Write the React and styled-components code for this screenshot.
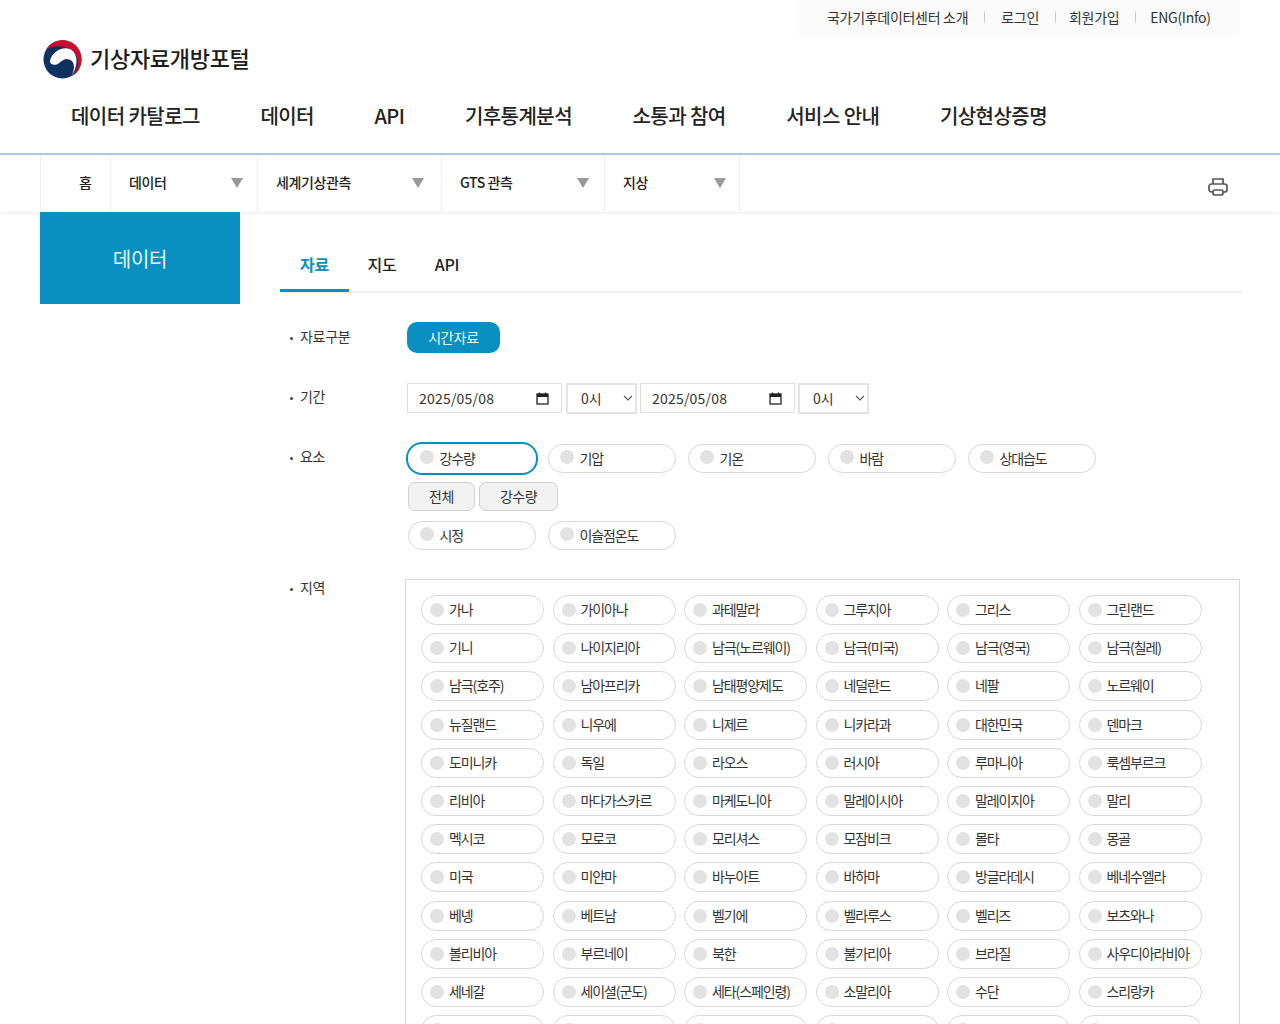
import React from 'react';
import styled, { createGlobalStyle } from 'styled-components';

const GlobalStyle = createGlobalStyle`
  html, body {
    margin: 0;
    padding: 0;
    background: #fff;
    color: #222;
    font-family: "Noto Sans CJK KR", "Noto Sans", sans-serif;
  }
  * { box-sizing: border-box; }
`;

const Page = styled.div`
  width: 1280px;
  height: 1024px;
  overflow: hidden;
`;

const Util = styled.div`
  display: flex;
  justify-content: flex-end;
  padding-right: 40px;
`;

const UtilBox = styled.div`
  display: flex;
  align-items: center;
  width: 443px;
  height: 35px;
  padding: 0 0 2px 30px;
  background: #fafafa;
  border-radius: 0 0 6px 6px;
  font-size: 14px;
  letter-spacing: -0.3px;
  color: #333;
`;

const UtilLink = styled.a`
  display: flex;
  align-items: center;
  &:not(:first-child)::before {
    content: '';
    width: 1px;
    height: 12px;
    margin: 0 ${(p) => p.$after}px 0 16px;
    background: #ccc;
  }
`;

const LogoRow = styled.div`
  display: flex;
  align-items: center;
  gap: 8px;
  height: 46px;
  margin: 1px 0 0 43px;
`;

const LogoText = styled.span`
  margin-bottom: 4px;
  font-size: 22px;
  font-weight: 500;
  letter-spacing: -0.3px;
  color: #1c1c1c;
`;

const MainNav = styled.nav`
  display: flex;
  align-items: center;
  gap: 60.5px;
  height: 73px;
  padding: 0 0 4px 71px;
  border-bottom: 2px solid #a9cbe2;
  font-size: 20px;
  font-weight: 500;
  letter-spacing: -0.55px;
  color: #222;
`;

const Crumbs = styled.div`
  display: flex;
  height: 57px;
  padding: 0 40px;
  background: #fff;
  box-shadow: 0 1px 3px rgba(0, 0, 0, 0.09);
  font-size: 14px;
  letter-spacing: -0.4px;
  font-weight: 500;
`;

const CrumbCell = styled.div`
  position: relative;
  display: flex;
  align-items: center;
  width: ${(p) => p.$w}px;
  padding: 0 0 3px ${(p) => p.$pad}px;
  border-left: 1px solid #eee;
  &:nth-child(5) { border-right: 1px solid #eee; }
`;

const Arrow = styled.span`
  position: absolute;
  right: ${(p) => p.$r}px;
  top: 23px;
  width: 0;
  height: 0;
  border-left: 6px solid transparent;
  border-right: 6px solid transparent;
  border-top: 10px solid #999;
`;

const PrintBtn = styled.div`
  display: flex;
  align-items: center;
  margin: 6px 11px 0 auto;
`;

const Body = styled.div`
  display: flex;
  padding: 0 40px;
  gap: 40px;
`;

const Side = styled.div`
  display: flex;
  align-items: center;
  justify-content: center;
  flex: 0 0 200px;
  height: 92px;
  background: #0a8fc1;
  color: #e6f5fb;
  font-size: 20px;
  letter-spacing: -0.2px;
`;

const Content = styled.div`
  flex: 1;
`;

const Tabs = styled.div`
  display: flex;
  height: 81px;
  margin-right: -2px;
  border-bottom: 2px solid #eee;
`;

const Tab = styled.div`
  display: flex;
  align-items: center;
  justify-content: center;
  width: ${(p) => p.$w}px;
  height: 80px;
  padding-top: ${(p) => (p.$active ? 27 : 23)}px;
  font-size: 16px;
  font-weight: ${(p) => (p.$active ? 700 : 500)};
  letter-spacing: -0.2px;
  color: ${(p) => (p.$active ? '#0a8fc1' : '#222')};
  border-bottom: ${(p) => (p.$active ? '3px solid #0a8fc1' : '0')};
`;

const FormRow = styled.div`
  display: flex;
  margin-top: ${(p) => p.$mt}px;
`;

const Label = styled.div`
  flex: 0 0 127px;
  margin-top: ${(p) => p.$top}px;
  padding-left: 10px;
  font-size: 14px;
  line-height: 20px;
  letter-spacing: -0.3px;
  color: #333;
  &::before {
    content: '';
    display: inline-block;
    width: 3px;
    height: 3px;
    margin-right: 7px;
    border-radius: 50%;
    vertical-align: middle;
    background: #444;
  }
`;

const Primary = styled.div`
  display: flex;
  align-items: center;
  justify-content: center;
  width: 93px;
  height: 31px;
  padding-bottom: 2px;
  border-radius: 10px;
  background: #0a8fc1;
  color: #f2fbff;
  font-size: 14px;
  letter-spacing: -0.2px;
`;

const PeriodRow = styled.div`
  display: flex;
  align-items: center;
  height: 30px;
`;

const DateBox = styled.div`
  display: flex;
  align-items: center;
  justify-content: space-between;
  width: 155px;
  height: 30px;
  padding: 0 12px 0 11px;
  border: 1px solid #ddd;
  font-size: 14px;
  letter-spacing: 0.2px;
  color: #333;
`;

const HourWrap = styled.div`
  position: relative;
  width: 71px;
  height: 31px;
  margin: 0 3px 0 ${(p) => p.$ml}px;
  color: #555;
  svg {
    position: absolute;
    right: 4px;
    top: 10px;
    pointer-events: none;
  }
`;

const HourSelect = styled.select`
  appearance: none;
  width: 100%;
  height: 100%;
  padding-left: 13px;
  border: 2px solid #e4e4e4;
  border-radius: 0;
  background: #fff;
  font-family: inherit;
  font-size: 14px;
  color: #333;
`;

const Elements = styled.div`
  display: flex;
  flex-direction: column;
`;

const PillRow = styled.div`
  display: flex;
  gap: 12px;
  padding-left: 0.5px;
`;

const Pill = styled.div`
  position: relative;
  display: flex;
  align-items: center;
  width: ${(p) => p.$w}px;
  height: ${(p) => p.$h}px;
  padding: 0 0 2px ${(p) => p.$pad}px;
  border: 1px solid #d8d8d8;
  border-radius: 16px;
  background: #fff;
  font-size: 14px;
  letter-spacing: -1.1px;
  color: #333;
  &::before {
    content: '';
    position: absolute;
    left: ${(p) => p.$dot}px;
    top: ${(p) => p.$dotTop}px;
    width: 14px;
    height: 14px;
    border-radius: 50%;
    background: #e2e2e2;
  }
`;

const FocusPill = styled(Pill)`
  border: 2px solid #0a8fc1;
  margin: -2px -2px -1px -2px;
  padding-left: 32px;
  width: 132px;
  height: 33px;
  &::before { left: 12px; top: 6px; }
`;

const ChipRow = styled.div`
  display: flex;
  gap: 4px;
  margin: 8px 0 10px 1px;
`;

const Chip = styled.div`
  display: flex;
  align-items: center;
  justify-content: center;
  width: ${(p) => p.$w}px;
  height: 29px;
  padding-bottom: 2px;
  border: 1px solid #d0d0d0;
  border-radius: 7px;
  background: #f2f2f2;
  font-size: 14px;
  letter-spacing: -0.5px;
  color: #333;
`;

const RegionBox = styled.div`
  display: grid;
  grid-template-columns: repeat(6, 123px);
  column-gap: 8.5px;
  row-gap: 8.2px;
  align-content: start;
  width: 835px;
  height: 520px;
  margin-left: -2px;
  padding: 15px 0 0 15px;
  border: 1px solid #d8d8d8;
`;

const Logo = () => (
  <svg width="39" height="39" viewBox="0 0 40 40">
    <circle cx="20" cy="20" r="19.5" fill="#10315f" />
    <path d="M3 10A19.500 19.500 0 0 1 39.500 20A19.500 19.500 0 0 1 29 37.500C35 32 38 24 34 16C29 7 14 3 3 10z" fill="#c8102e" />
    <path d="M7 22C9 12 20 6 28 9.500C35 13 37.500 25 29 37.500C33 30 33 22 27 20C22 18 19 22 16 24C13 26 8 26 7 22z" fill="#fff" />
  </svg>
);

const CalendarIcon = () => (
  <svg width="13" height="13" viewBox="0 0 13 13">
    <rect x="1" y="2" width="11" height="10" fill="none" stroke="#222" strokeWidth="1.300" />
    <rect x="1" y="2" width="11" height="3" fill="#222" />
    <path d="M3.500 .5v2M9.500 .5v2" stroke="#222" strokeWidth="1.300" />
  </svg>
);

const Chevron = () => (
  <svg width="10" height="10" viewBox="0 0 10 10" fill="none" stroke="currentColor" strokeWidth="1.100">
    <path d="M1 3l4 4 4-4" />
  </svg>
);

const PrintIcon = () => (
  <svg width="22" height="22" viewBox="0 0 22 22" fill="none" stroke="#555" strokeWidth="1.700">
    <path d="M6 8V3h10v5" />
    <rect x="2" y="8" width="18" height="8" rx="2.500" />
    <rect x="6" y="14" width="10" height="5" rx="2" fill="#fff" />
  </svg>
);

const navItems = ['데이터 카탈로그', '데이터', 'API', '기후통계분석', '소통과 참여', '서비스 안내', '기상현상증명'];

const crumbs = [
  { label: '데이터', w: 147, pad: 18, r: 14 },
  { label: '세계기상관측', w: 184, pad: 18, r: 17 },
  { label: 'GTS 관측', w: 163, pad: 18, r: 15 },
  { label: '지상', w: 136, pad: 18, r: 13 },
];

// the last row is cut off by the page edge, only the pill tops show
const regions = [
  '가나', '가이아나', '과테말라', '그루지아', '그리스', '그린랜드',
  '기니', '나이지리아', '남극(노르웨이)', '남극(미국)', '남극(영국)', '남극(칠레)',
  '남극(호주)', '남아프리카', '남태평양제도', '네덜란드', '네팔', '노르웨이',
  '뉴질랜드', '니우에', '니제르', '니카라과', '대한민국', '덴마크',
  '도미니카', '독일', '라오스', '러시아', '루마니아', '룩셈부르크',
  '리비아', '마다가스카르', '마케도니아', '말레이시아', '말레이지아', '말리',
  '멕시코', '모로코', '모리셔스', '모잠비크', '몰타', '몽골',
  '미국', '미얀마', '바누아트', '바하마', '방글라데시', '베네수엘라',
  '베넹', '베트남', '벨기에', '벨라루스', '벨리즈', '보츠와나',
  '볼리비아', '부르네이', '북한', '불가리아', '브라질', '사우디아라비아',
  '세네갈', '세이셜(군도)', '세타(스페인령)', '소말리아', '수단', '스리랑카',
  '', '', '', '', '', '',
];

const elements = ['기압', '기온', '바람', '상대습도'];

export default function App() {
  return (
    <Page>
      <GlobalStyle />
      <Util>
        <UtilBox>
          <UtilLink>국가기후데이터센터 소개</UtilLink>
          <UtilLink $after={16}>로그인</UtilLink>
          <UtilLink $after={13}>회원가입</UtilLink>
          <UtilLink $after={14}>ENG(Info)</UtilLink>
        </UtilBox>
      </Util>
      <LogoRow>
        <Logo />
        <LogoText>기상자료개방포털</LogoText>
      </LogoRow>
      <MainNav>
        {navItems.map((item) => (
          <span key={item}>{item}</span>
        ))}
      </MainNav>
      <Crumbs>
        <CrumbCell $w={70} $pad={38}>홈</CrumbCell>
        {crumbs.map((c) => (
          <CrumbCell key={c.label} $w={c.w} $pad={c.pad}>
            {c.label}
            <Arrow $r={c.r} />
          </CrumbCell>
        ))}
        <PrintBtn>
          <PrintIcon />
        </PrintBtn>
      </Crumbs>
      <Body>
        <Side>데이터</Side>
        <Content>
          <Tabs>
            <Tab $w={69} $active>자료</Tab>
            <Tab $w={66}>지도</Tab>
            <Tab $w={64}>API</Tab>
          </Tabs>
          <FormRow $mt={29}>
            <Label $top={4}>자료구분</Label>
            <Primary>시간자료</Primary>
          </FormRow>
          <FormRow $mt={30}>
            <Label $top={3}>기간</Label>
            <PeriodRow>
              <DateBox>2025/05/08<CalendarIcon /></DateBox>
              <HourWrap $ml={4}>
                <HourSelect><option>0시</option></HourSelect>
                <Chevron />
              </HourWrap>
              <DateBox>2025/05/08<CalendarIcon /></DateBox>
              <HourWrap $ml={3}>
                <HourSelect><option>0시</option></HourSelect>
                <Chevron />
              </HourWrap>
            </PeriodRow>
          </FormRow>
          <FormRow $mt={31}>
            <Label $top={2}>요소</Label>
            <Elements>
              <PillRow>
                <FocusPill $w={132} $h={33} $pad={32} $dot={12} $dotTop={6}>강수량</FocusPill>
                {elements.map((e) => (
                  <Pill key={e} $w={128} $h={29} $pad={31} $dot={11} $dotTop={5}>{e}</Pill>
                ))}
              </PillRow>
              <ChipRow>
                <Chip $w={67}>전체</Chip>
                <Chip $w={79}>강수량</Chip>
              </ChipRow>
              <PillRow>
                <Pill $w={128} $h={29} $pad={31} $dot={11} $dotTop={5}>시정</Pill>
                <Pill $w={128} $h={29} $pad={31} $dot={11} $dotTop={5}>이슬점온도</Pill>
              </PillRow>
            </Elements>
          </FormRow>
          <FormRow $mt={29}>
            <Label $top={-2}>지역</Label>
            <RegionBox>
              {regions.map((r, i) => (
                <Pill key={i} $w={123} $h={30} $pad={27} $dot={8} $dotTop={7}>{r}</Pill>
              ))}
            </RegionBox>
          </FormRow>
        </Content>
      </Body>
    </Page>
  );
}
